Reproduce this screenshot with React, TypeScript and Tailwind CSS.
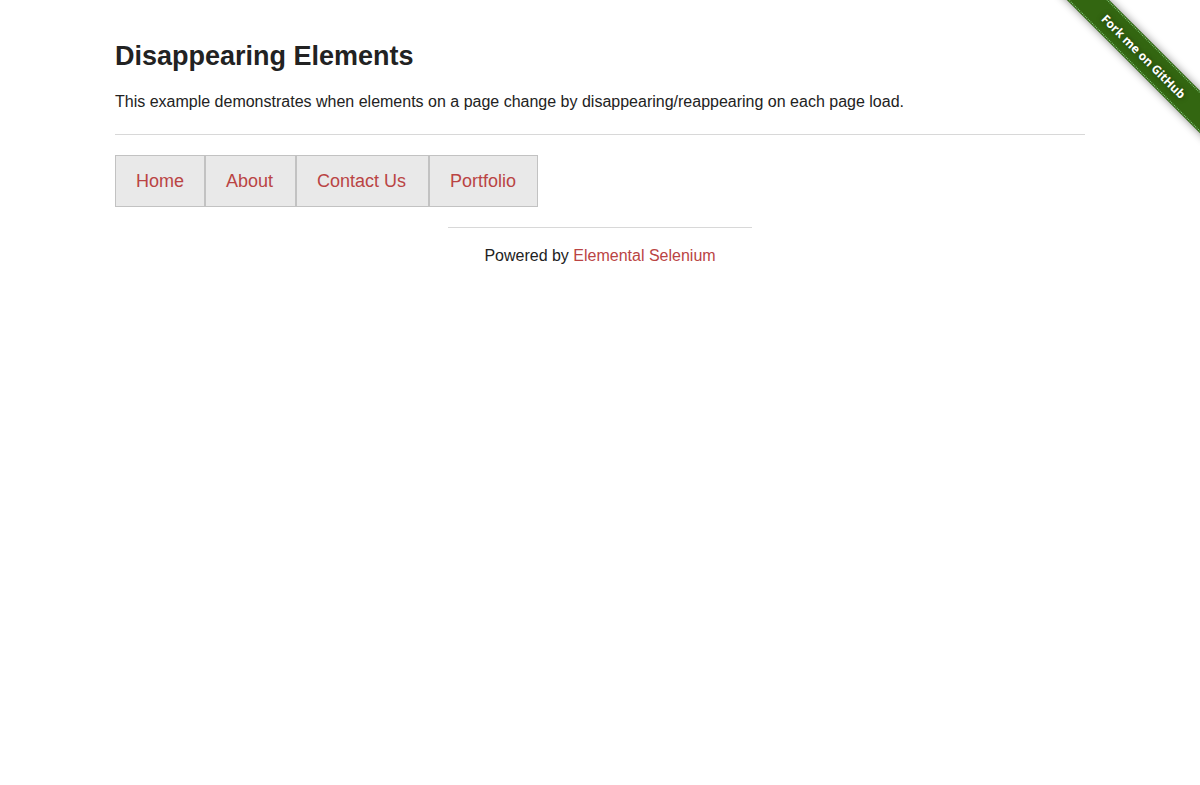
const links = ['Home', 'About', 'Contact Us', 'Portfolio'];

export default function App() {
  return (
    <div className="relative min-h-screen overflow-hidden bg-white font-['Liberation_Sans',sans-serif] text-[#222222]">
      <a
        href="#github"
        className="absolute -right-[49px] top-[41px] flex h-[30px] w-[210px] rotate-45 items-center justify-center bg-[#336611] pt-[2px] font-['Open_Sans',sans-serif] text-[12px] font-bold text-white shadow-[0_0_8px_rgba(0,0,0,0.45)] text-shadow-[0_0_5px_rgba(0,0,0,0.5)]"
      >
        <span className="absolute inset-x-0 inset-y-[1px] border-y border-dotted border-[#88cc88]" />
        Fork me on GitHub
      </a>
      <main className="mx-auto max-w-[1000px] px-[15px] pt-[37px]">
        <h3 className="text-[27px] font-bold leading-[38px]">Disappearing Elements</h3>
        <p className="mt-[14px] text-[16px] leading-[26px]">
          This example demonstrates when elements on a page change by disappearing/reappearing on each page load.
        </p>
        <hr className="mt-[19px] border-[#d8d8d8]" />
        <nav className="mt-[20px]">
          <ul className="grid grid-cols-[90px_91px_133px_109px]">
            {links.map((label) => (
              <li key={label}>
                <a
                  href="#page"
                  className="block border border-[#c2c2c2] bg-[#e9e9e9] py-[12px] pl-[20px] text-[18px] leading-[26px] text-[#ba4444]"
                >
                  {label}
                </a>
              </li>
            ))}
          </ul>
        </nav>
      </main>
      <footer className="mx-auto mt-[20px] w-[304px] border-t border-[#d8d8d8] pt-[15px] text-center text-[16px] leading-[26px]">
        Powered by <a href="#elemental" className="text-[#ba4444]">Elemental Selenium</a>
      </footer>
    </div>
  );
}
